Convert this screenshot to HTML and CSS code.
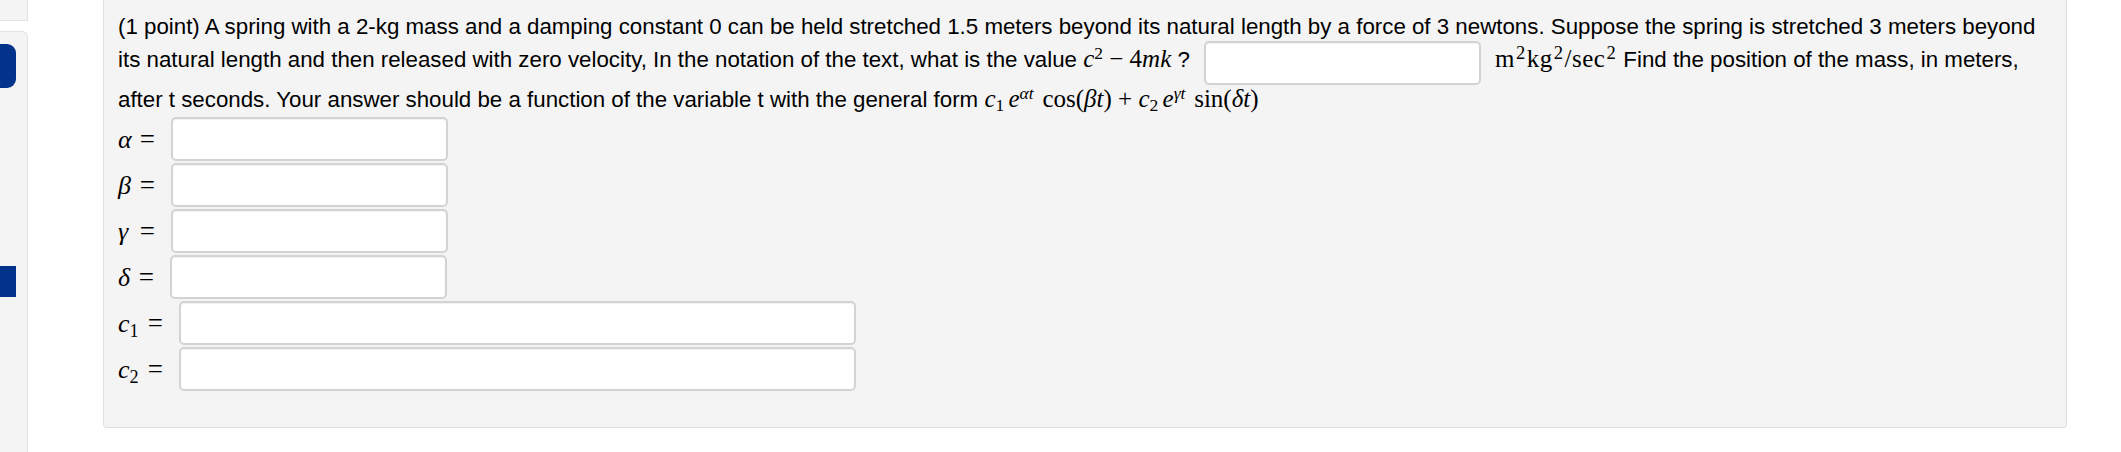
FILE: index.html
```html
<!DOCTYPE html>
<html lang="en">
<head>
<meta charset="utf-8">
<title>Spring problem</title>
<link rel="stylesheet" href="styles.css">
</head>
<body>
<div class="page">
  <aside class="side">
    <div class="side-top"></div>
    <div class="side-nav">
      <div class="nav-active"></div>
      <div class="nav-mark"></div>
    </div>
  </aside>
  <main class="main">
    <div class="problem">
      <p class="stmt">(1 point) A spring with a 2-kg mass and a damping constant 0 can be held stretched 1.5 meters beyond its natural length by a force of 3 newtons. Suppose the spring is stretched 3 meters beyond its natural length and then released with zero velocity, In the notation of the text, what is the value <span class="m"><i>c</i><sup>2</sup><span class="bin">−</span>4<i>mk</i></span> ? <span class="ans ans-inline"></span><span class="m unit">m<sup>2</sup>kg<sup>2</sup>/sec<sup>2</sup></span> Find the position of the mass, in meters, after t seconds. Your answer should be a function of the variable t with the general form <span class="m"><i>c</i><sub>1</sub><span class="thin"></span><i>e</i><sup><i>αt</i></sup> <span class="fn">cos(<i>βt</i>)</span><span class="bin">+</span><i>c</i><sub>2</sub><span class="thin"></span><i>e</i><sup><i>γt</i></sup> <span class="fn">sin(<i>δt</i>)</span></span></p>
      <div class="answers">
        <div class="row"><span class="lbl"><i>α</i><span class="eq">=</span></span><span class="ans"></span></div>
        <div class="row"><span class="lbl"><i>β</i><span class="eq">=</span></span><span class="ans"></span></div>
        <div class="row"><span class="lbl"><i>γ</i><span class="eq">=</span></span><span class="ans"></span></div>
        <div class="row"><span class="lbl lbl-d"><i>δ</i><span class="eq">=</span></span><span class="ans"></span></div>
        <div class="row"><span class="lbl lbl-c"><span><i>c</i><sub>1</sub></span><span class="eq">=</span></span><span class="ans ans-wide"></span></div>
        <div class="row"><span class="lbl lbl-c"><span><i>c</i><sub>2</sub></span><span class="eq">=</span></span><span class="ans ans-wide"></span></div>
      </div>
    </div>
  </main>
</div>
</body>
</html>
```
FILE: styles.css
```css
* { box-sizing: border-box; }
html, body { margin: 0; padding: 0; background: #fff; }
body {
  font-family: "Liberation Sans", Arial, Helvetica, sans-serif;
  color: #000;
  width: 2121px;
  height: 452px;
  overflow: hidden;
}
.page {
  display: flex;
  align-items: flex-start;
  height: 452px;
}
.side {
  width: 28px;
  height: 452px;
  display: flex;
  flex-direction: column;
  flex: none;
}
.side-top {
  height: 21px;
  background: #f4f4f4;
  border-right: 1px solid #e2e2e2;
  border-bottom: 1px solid #e2e2e2;
}
.side-nav {
  margin-top: 10px;
  flex: 1;
  background: #f4f4f4;
  border-top: 1px solid #e2e2e2;
  border-right: 1px solid #e2e2e2;
  border-top-right-radius: 6px;
  padding-top: 12px;
}
.nav-active {
  width: 16px;
  height: 44px;
  background: #02338a;
  border-radius: 0 9px 9px 0;
}
.nav-mark {
  margin-top: 178px;
  width: 16px;
  height: 31px;
  background: #02338a;
}
.main {
  margin-left: 75px;
  width: 1964px;
  flex: none;
}
.problem {
  background: #f4f4f4;
  border: 1px solid #e0e0e0;
  border-top: 0;
  border-radius: 0 0 4px 4px;
  padding: 10px 14px 35px 14px;
}
.stmt {
  margin: 0;
  font-size: 22.3px;
  line-height: 33px;
}
.m {
  font-family: "Liberation Serif", "Times New Roman", serif;
  font-size: 25px;
  line-height: 1;
}
.m i, .lbl i { font-style: italic; }
.m sup, .m sub, .lbl sub {
  font-size: 0.7em;
  line-height: 0;
}
.m sup { vertical-align: 0.45em; }
.m sub, .lbl sub { vertical-align: -0.25em; }
.bin { margin: 0 0.25em; }
.thin { display: inline-block; width: 0.17em; }
.fn { margin-left: 0.1em; }
.unit { letter-spacing: 0.5px; }
.unit sup { font-size: 0.74em; padding: 0 1px 0 1px; }
.ans {
  display: inline-block;
  width: 277px;
  height: 44px;
  background: #fff;
  border: 2px solid #d3d3d3;
  border-radius: 5px;
  box-shadow: inset 0 1px 1px rgba(0, 0, 0, 0.06);
}
.ans-inline {
  margin: -2px 14px -2px 8px;
  vertical-align: -16px;
}
.answers { display: flex; flex-direction: column; }
.row {
  display: flex;
  align-items: center;
  height: 46px;
  gap: 16px;
}
.lbl {
  font-family: "Liberation Serif", "Times New Roman", serif;
  font-size: 26px;
  line-height: 1;
  white-space: nowrap;
  width: 37px;
  display: flex;
  justify-content: space-between;
  align-items: baseline;
}
.lbl-d { width: 36px; }
.lbl-c { width: 45px; }
.eq { font-size: 27px; }
.ans-wide { width: 677px; }
```
